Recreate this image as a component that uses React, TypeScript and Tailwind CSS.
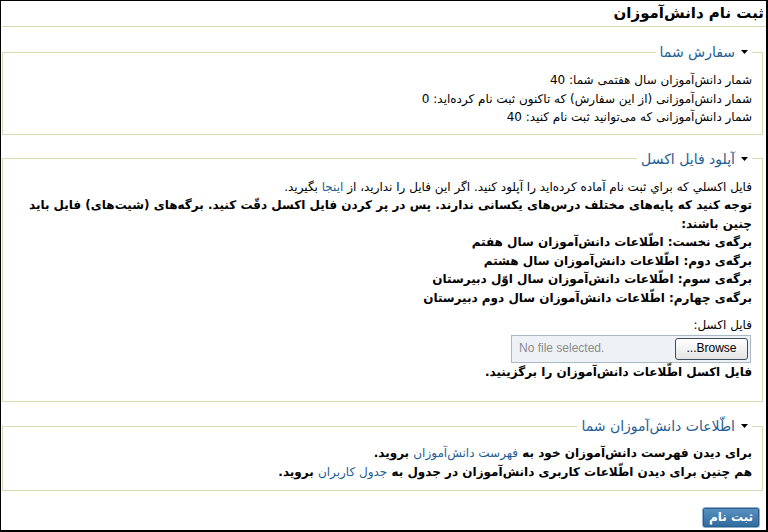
import React from "react";

const Tri = () => (
  <svg width="7" height="4" viewBox="0 0 7 4" className="inline-block">
    <polygon points="0,0 7,0 3.5,4" fill="#000" />
  </svg>
);

const Legend = ({ children }: { children: React.ReactNode }) => (
  <legend className="px-[4px] leading-[18px] text-[14px] text-[#1f5d92]">
    <span className="flex items-center gap-[6px]">
      <Tri />
      <span>{children}</span>
    </span>
  </legend>
);

export default function App() {
  return (
    <div
      dir="rtl"
      className="w-[768px] h-[532px] box-border overflow-hidden bg-white border-l border-t border-r-2 border-b-2 border-black text-[12px] text-black font-['DejaVu_Sans',sans-serif]"
    >
      <h2 className="h-[26px] border-b border-[#d6dbb3] ml-[1px] pr-[2px] text-[15px] font-bold leading-[25px]">
        ثبت نام دانش‌آموزان
      </h2>

      <fieldset className="mt-[16px] ml-[1px] mr-[3px] border border-[#d6dbb3] px-[10px]">
        <Legend>سفارش شما</Legend>
        <div className="pt-[10px] pb-[7px] leading-[18.5px]">
          <div>شمار دانش‌آموزان سال هفتمی شما: 40</div>
          <div>شمار دانش‌آموزانی (از این سفارش) که تاکنون ثبت نام کرده‌اید: 0</div>
          <div>شمار دانش‌آموزانی که می‌توانید ثبت نام کنید: 40</div>
        </div>
      </fieldset>

      <fieldset className="mt-[15px] ml-[1px] mr-[3px] border border-[#d6dbb3] px-[10px]">
        <Legend>آپلود فایل اکسل</Legend>
        <div className="pt-[10px] pb-[20px] leading-[18.5px]">
          <div>
            فایل اکسلي که براي ثبت نام آماده کرده‌اید را آپلود کنید. اگر این فایل را ندارید، از{" "}
            <span className="text-[#1f5d92]">اینجا</span> بگیرید.
          </div>
          <div className="font-bold">
            <div className="whitespace-nowrap">
              توجه کنید که پایه‌های مختلف درس‌های یکسانی ندارند. پس در پر کردن فایل اکسل دقّت کنید. برگه‌های (شیت‌های) فایل باید
            </div>
            <div>چنین باشند:</div>
            <div>برگه‌ی نخست: اطّلاعات دانش‌آموزان سال هفتم</div>
            <div>برگه‌ی دوم: اطّلاعات دانش‌آموزان سال هشتم</div>
            <div>برگه‌ی سوم: اطّلاعات دانش‌آموزان سال اوّل دبیرستان</div>
            <div>برگه‌ی چهارم: اطّلاعات دانش‌آموزان سال دوم دبیرستان</div>
          </div>
          <div className="mt-[9px]">فایل اکسل:</div>
          <div className="flex">
            <div className="w-[240px] h-[28px] mr-[1px] border border-[#a9b8c6] bg-[#eef2f6] flex items-center justify-between pr-[2px] pl-[7px]">
              <div className="h-[22px] w-[73px] rounded-[3px] border border-[#3f4d5a] bg-gradient-to-b from-white to-[#e4e4e4] flex items-center justify-center text-[12px] font-['Liberation_Sans',sans-serif] text-black">
                Browse...
              </div>
              <span dir="ltr" className="text-[12px] text-[#8b8b8b] font-['Liberation_Sans',sans-serif]">
                No file selected.
              </span>
            </div>
          </div>
          <div className="font-bold">فایل اکسل اطّلاعات دانش‌آموزان را برگزینید.</div>
        </div>
      </fieldset>

      <fieldset className="mt-[15px] ml-[1px] mr-[3px] border border-[#d6dbb3] px-[10px]">
        <Legend>اطّلاعات دانش‌آموزان شما</Legend>
        <div className="pt-[9px] pb-[9px] leading-[18.5px] font-bold">
          <div>
            برای دیدن فهرست دانش‌آموزان خود به{" "}
            <span className="text-[#1f5d92] font-normal">فهرست دانش‌آموزان</span> بروید.
          </div>
          <div>
            هم چنین برای دیدن اطّلاعات کاربری دانش‌آموزان در جدول به{" "}
            <span className="text-[#1f5d92] font-normal">جدول کاربران</span> بروید.
          </div>
        </div>
      </fieldset>

      <div className="mt-[16px] mr-[6px] flex">
        <button className="h-[21px] w-[58px] rounded-[3px] border border-[#8fb0cc] bg-gradient-to-b from-[#5a93c2] to-[#2f6a9e] text-white text-[12px] font-bold leading-[19px] shadow-[inset_0_0_0_1px_#2d5f8a]">
          ثبت نام
        </button>
      </div>
    </div>
  );
}
